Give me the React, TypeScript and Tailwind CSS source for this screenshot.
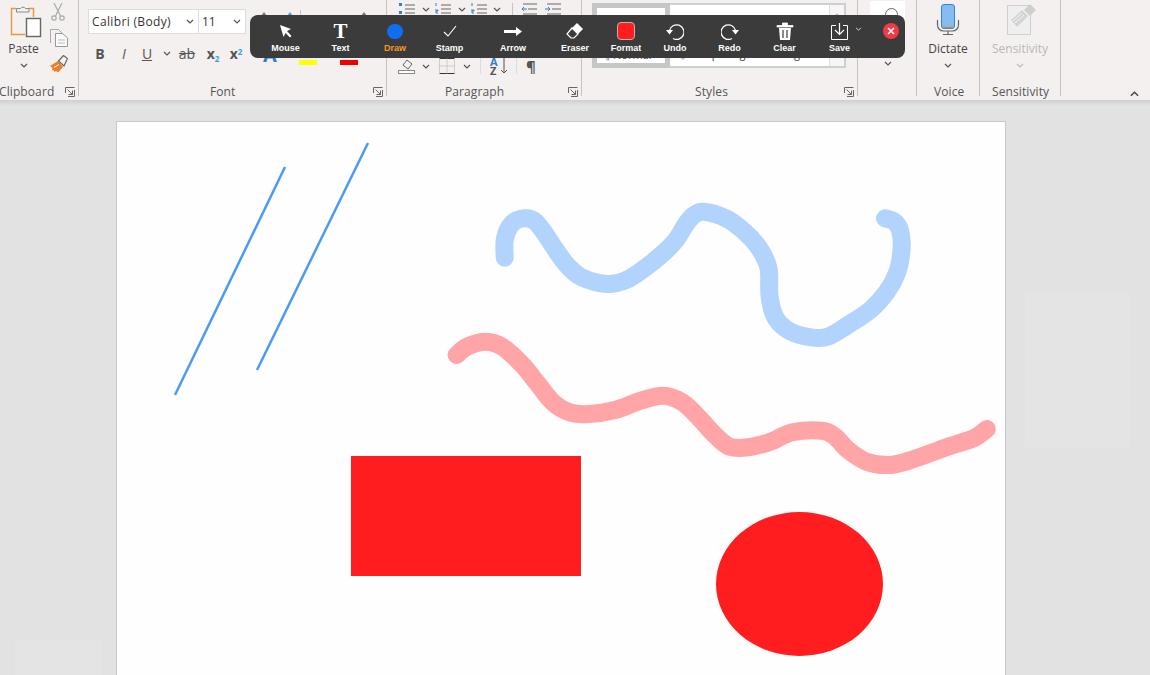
import React from 'react'

const ui = { fontFamily: '"Open Sans", "Noto Sans", sans-serif' }

const Chev = ({ className = 'w-[8px] h-[5px]', color = '#555' }: { className?: string; color?: string }) => (
  <svg viewBox="0 0 8 5" className={className}>
    <path d="M1 1l3 3 3-3" fill="none" stroke={color} strokeWidth="1.2" />
  </svg>
)

const Launcher = () => (
  <svg viewBox="0 0 10 10" className="w-[10px] h-[10px]">
    <path d="M.5 6V.5h9M2.500 2.500l5 5M7.500 3.500v4h-4" fill="none" stroke="#666" strokeWidth="1" />
    <path d="M9.500 3v6.500H3" fill="none" stroke="#666" strokeWidth="1" />
  </svg>
)

const Label = ({ children, pl, launcher = true }: { children: string; pl: string; launcher?: boolean }) => (
  <div className={`flex items-center h-[18px] mt-auto mb-[-5px] pr-[3px] text-[12px] whitespace-nowrap text-[#555] ${pl}`}>
    <span className="tracking-[0.1px]">{children}</span>
    {launcher && <span className="ml-auto mb-[1px] flex"><Launcher /></span>}
  </div>
)

// lines of a list icon
const ListIcon = ({ mark }: { mark: string }) => (
  <svg viewBox="0 0 16 12" className="w-[16px] h-[12px]">
    <path d="M6 2h10M6 6h10M6 10h10" stroke="#666" strokeWidth="1" />
    {mark === 'dot' && <path d="M0 0h3v3H0zM0 8h3v3H0z" fill="#2f7fc9" />}
    {mark === 'num' && <path d="M1 0v3M0 7h3v1H1v2h2" fill="none" stroke="#2f7fc9" strokeWidth="1" />}
  </svg>
)

// only the tip of these buttons shows above the toolbar
const Peak = ({ className, color = '#777' }: { className: string; color?: string }) => (
  <svg viewBox="0 0 6 4" className={`w-[6px] h-[4px] self-start mt-[3px] ${className}`}>
    <path d="M0 4l3-4 3 4z" fill={color} />
  </svg>
)

const ClipboardGroup = () => (
  <div className="w-[79px] shrink-0 flex flex-col border-r border-[#c6c4c2]">
    <div className="flex">
      <div className="w-[47px] flex flex-col items-center">
        <svg viewBox="0 0 32 34" className="w-[32px] h-[34px] mt-[4px] ml-[5px]">
          <path d="M6 4.500H1.500v26H15M19 4.500h4.500V13" fill="none" stroke="#e19a3c" strokeWidth="1.400" />
          <path d="M6.500 8V4.500h4a3 3 0 0 1 5 0h3.500V8z" fill="#f3f0ef" stroke="#8a8a8a" strokeWidth="1" />
          <rect x="16.500" y="14.500" width="14" height="18" fill="#fff" stroke="#666" strokeWidth="1.400" />
        </svg>
        <div className="text-[12px] text-[#444] mt-[2px] leading-[18px]">Paste</div>
        <div className="mt-[5px] flex"><Chev /></div>
      </div>
      <div className="flex flex-col items-center w-[24px]">
        <svg viewBox="0 0 14 18" className="w-[14px] h-[18px] mt-[3px] ml-[-2px]">
          <path d="M3 0l6.500 13M11 0L4.500 13" stroke="#aaa" strokeWidth="1.200" />
          <circle cx="3" cy="15" r="2.200" fill="none" stroke="#aaa" strokeWidth="1.200" />
          <circle cx="11" cy="15" r="2.200" fill="none" stroke="#aaa" strokeWidth="1.200" />
        </svg>
        <svg viewBox="0 0 18 18" className="w-[18px] h-[18px] mt-[8px]">
          <path d="M.5 14V.5h8L12 4v1" fill="none" stroke="#aaa" />
          <path d="M5.500 4.500h7l5 4.500v8.500h-12z" fill="#fafafa" stroke="#999" />
          <path d="M8 11h7M8 14h7" stroke="#bbb" />
        </svg>
        <svg viewBox="0 0 18 18" className="w-[18px] h-[18px] mt-[8px]">
          <path d="M0 11l8-5 5 6-5 5.500-2-1.500-1.500 1-1-2-1.500.500.500-2.500z" fill="#ea7f28" />
          <path d="M4 12.500l5-3" stroke="#fff" strokeWidth="1" />
          <path d="M8.500 6l5-5.500 4 3-3.500 7.500z" fill="#f3f0ef" stroke="#666" strokeWidth="1.200" />
        </svg>
      </div>
    </div>
    <Label pl="ml-[-1px]">Clipboard</Label>
  </div>
)

const FontGroup = () => (
  <div className="w-[308px] shrink-0 flex flex-col border-r border-[#c6c4c2]">
    <div className="flex items-center pl-[9px] mt-[9px]">
      <div className="w-[111px] h-[25px] bg-white border border-[#dcdcdc] flex items-center pl-[3px] pr-[4px] text-[12px] text-[#333]">
        <span className="tracking-[0.35px]">Calibri (Body)</span>
        <span className="ml-auto flex"><Chev /></span>
      </div>
      <div className="w-[47px] h-[25px] bg-white border border-l-0 border-[#dcdcdc] flex items-center pl-[3px] pr-[4px] text-[12px] text-[#333]">
        <span>11</span>
        <span className="ml-auto flex"><Chev /></span>
      </div>
      <Peak className="ml-[15px]" />
      <Peak className="ml-[20px]" color="#5a9bd5" />
      <div className="w-px h-[6px] self-start mt-[1px] ml-[7px] bg-[#c6c4c2]" />
      <Peak className="ml-[60px]" />
    </div>
    <div className="flex items-center pl-[9px] mt-[6px] h-[26px] text-[#555]">
      <span className="w-[24px] text-center text-[14px] font-bold">B</span>
      <span className="w-[24px] text-center text-[14px] italic">I</span>
      <span className="w-[22px] text-center text-[14px] underline">U</span>
      <span className="w-[18px] flex justify-center"><Chev /></span>
      <span className="w-[22px] text-center text-[14px] line-through">ab</span>
      <span className="w-[28px] text-center text-[14px] font-bold pl-[2px]">x<sub className="text-[8px] text-[#3b9bd8] bottom-[-3px]">2</sub></span>
      <span className="w-[20px] text-center text-[14px] font-bold">x<sup className="text-[8px] text-[#3b9bd8]">2</sup></span>
      <span className="w-[42px] text-center text-[20px] font-bold text-[#2a7fd0] leading-none pl-[6px] mt-[4px]">A</span>
      <div className="ml-[11px] w-[18px] h-[5px] mt-[18px] bg-[#ffff00]" />
      <div className="ml-[23px] w-[18px] h-[5px] mt-[18px] bg-[#f00000]" />
    </div>
    <Label pl="pl-[131px]">Font</Label>
  </div>
)

const ParagraphGroup = () => (
  <div className="w-[195px] shrink-0 flex flex-col border-r border-[#c6c4c2]">
    <div className="flex items-center pl-[12px] mt-[3px] h-[12px]">
      <ListIcon mark="dot" />
      <span className="ml-[7px] flex"><Chev /></span>
      <span className="ml-[5px] flex"><ListIcon mark="num" /></span>
      <span className="ml-[7px] flex"><Chev /></span>
      <span className="ml-[5px] flex"><ListIcon mark="num" /></span>
      <span className="ml-[6px] flex"><Chev /></span>
      <div className="w-px h-[12px] bg-[#c6c4c2] ml-[11px]" />
      <svg viewBox="0 0 16 12" className="w-[16px] h-[12px] ml-[8px]">
        <path d="M2 1h14M7 6h9M2 11h14" stroke="#666" />
        <path d="M6 6H1l2-2M1 6l2 2" fill="none" stroke="#2f7fc9" />
      </svg>
      <svg viewBox="0 0 16 12" className="w-[16px] h-[12px] ml-[8px]">
        <path d="M2 1h14M7 6h9M2 11h14" stroke="#666" />
        <path d="M0 6h5L3 4M5 6L3 8" fill="none" stroke="#2f7fc9" />
      </svg>
    </div>
    <div className="flex items-center pl-[11px] mt-[43px] h-[16px]">
      <svg viewBox="0 0 18 16" className="w-[18px] h-[16px]">
        <path d="M5 7l4-5 5 4-4 5z" fill="none" stroke="#666" />
        <rect x=".5" y="12.500" width="16" height="3" fill="#fff" stroke="#888" />
      </svg>
      <span className="ml-[6px] flex"><Chev /></span>
      <svg viewBox="0 0 16 16" className="w-[16px] h-[16px] ml-[9px]">
        <path d="M.5.5h15M.5 15.500h15" stroke="#333" />
        <path d="M.5 8h15M8 .5v15M.5.5v15M15.500.5v15" stroke="#aaa" strokeDasharray="1 1" />
      </svg>
      <span className="ml-[8px] flex"><Chev /></span>
      <div className="w-px h-[16px] bg-[#dcdcdc] ml-[9px]" />
      <div className="ml-[9px] w-[18px] text-[11px] leading-[9px] font-bold text-[#2f7fc9]">
        A<div className="text-[#555]">Z</div>
      </div>
      <svg viewBox="0 0 8 16" className="w-[8px] h-[16px] ml-[-8px]">
        <path d="M4 0v15M1 12l3 3 3-3" fill="none" stroke="#555" />
      </svg>
      <div className="w-px h-[16px] bg-[#dcdcdc] ml-[8px]" />
      <span className="ml-[9px] text-[15px] leading-none text-[#555] font-bold">¶</span>
    </div>
    <Label pl="pl-[58px]">Paragraph</Label>
  </div>
)

const StylesGroup = () => (
  <div className="w-[276px] shrink-0 flex flex-col border-r border-[#c6c4c2]">
    <div className="flex ml-[10px] mt-[3px] h-[65px] w-[254px] border-2 border-[#cfcfcf]">
      <div className="w-[78px] ml-[-2px] my-[-2px] shrink-0 border-[5px] border-[#c6c6c6] bg-white flex items-end pb-[5px] text-[11px] leading-[6px] text-[#444] pl-[6px]">¶ Normal</div>
      <div className="flex-1 bg-white flex items-end gap-[12px] pl-[8px] pb-[9px] text-[11px] leading-[6px] text-[#444]">
        <span>¶ No Spacing</span>
        <span>Heading 1</span>
      </div>
      <div className="w-[15px] bg-[#f7f6f6] border-l border-[#ddd] flex flex-col items-center justify-between py-[8px]">
        <Chev className="w-[8px] h-[5px] rotate-180" color="#bbb" />
        <Chev />
      </div>
    </div>
    <Label pl="pl-[113px]">Styles</Label>
  </div>
)

const EditingGroup = () => (
  <div className="w-[59px] shrink-0 flex flex-col border-r border-[#c6c4c2]">
    <div className="ml-[12px] mt-[1px] w-[35px] h-[50px] bg-white flex justify-center pt-[7px] pl-[8px]">
      <span className="w-[13px] h-[13px] rounded-full border-[1.5px] border-[#666]" />
    </div>
    <div className="flex justify-center mt-[10px] ml-[1px]"><Chev /></div>
  </div>
)

const VoiceGroup = () => (
  <div className="w-[63px] shrink-0 flex flex-col items-stretch border-r border-[#c6c4c2]">
    <div className="flex flex-col items-center">
      <svg viewBox="0 0 24 32" className="w-[24px] h-[32px] mt-[4px]">
        <rect x="5.500" y=".5" width="13" height="24" rx="2.500" fill="#86bcf0" stroke="#2f86d6" />
        <path d="M6 23.500h12" stroke="#b98a63" strokeWidth="1.500" />
        <path d="M1.500 16v5a6 6 0 0 0 6 6h9a6 6 0 0 0 6-6v-5M12 27v3M7 30.500h10" fill="none" stroke="#666" strokeWidth="1.200" />
      </svg>
      <div className="text-[12px] text-[#444] mt-[4px] leading-[18px]">Dictate</div>
      <div className="mt-[5px] flex"><Chev /></div>
    </div>
    <Label pl="pl-[17px]" launcher={false}>Voice</Label>
  </div>
)

const SensitivityGroup = () => (
  <div className="w-[81px] shrink-0 flex flex-col border-r border-[#c6c4c2]">
    <div className="flex flex-col items-center">
      <svg viewBox="0 0 30 32" className="w-[30px] h-[32px] mt-[3px] ml-[3px]">
        <rect x=".5" y="2.500" width="23" height="29" fill="#efefef" stroke="#cfcfcf" />
        <path d="M4 17L15 7l6 6-11 11z" fill="#d4d4d4" />
        <path d="M6 18l9-8M8 20l9-8" stroke="#f3f3f3" />
        <path d="M17 7l6-6 6 6-6 6z" fill="#cfcfcf" />
      </svg>
      <div className="text-[12px] text-[#b8b8b8] mt-[5px] leading-[18px]">Sensitivity</div>
      <div className="mt-[5px] flex"><Chev color="#bbb" /></div>
    </div>
    <Label pl="pl-[12px]" launcher={false}>Sensitivity</Label>
  </div>
)

const tools = [
  { label: 'Mouse', w: 'w-[55px]', icon: (
    <svg viewBox="0 0 14 14" className="w-[14px] h-[14px]">
      <path d="M1 1l11 4-4 2 4.500 5-1.500 1.500L6.500 9 4.500 13z" fill="#fff" />
    </svg>
  ) },
  { label: 'Text', w: 'w-[55px]', icon: <span className="text-[21px] leading-[20px] font-bold text-white" style={{ fontFamily: '"Liberation Serif", serif' }}>T</span> },
  { label: 'Draw', w: 'w-[54px]', active: true, icon: <span className="w-[16px] h-[15px] rounded-full bg-[#0e6fef]" /> },
  { label: 'Stamp', w: 'w-[55px]', icon: (
    <svg viewBox="0 0 14 12" className="w-[14px] h-[12px]">
      <path d="M1 7l4 4 8-10" fill="none" stroke="#fff" strokeWidth="1.100" />
    </svg>
  ) },
  { label: 'Arrow', w: 'w-[72px]', icon: (
    <svg viewBox="0 0 18 9" className="w-[18px] h-[9px]">
      <path d="M0 3h12V0l6 4.500-6 4.500V6H0z" fill="#fff" />
    </svg>
  ) },
  { label: 'Eraser', w: 'w-[52px]', icon: (
    <svg viewBox="0 0 18 18" className="w-[18px] h-[18px]">
      <path d="M11 1l6 6-5 5-6-6z" fill="#fff" />
      <path d="M6 6l6 6-4 4H5l-4-4z" fill="none" stroke="#fff" strokeWidth="1.200" />
    </svg>
  ) },
  { label: 'Format', w: 'w-[50px]', icon: <span className="w-[18px] h-[18px] rounded-[4px] bg-[#ff1d1f] border border-[#c4b0b0]" /> },
  { label: 'Undo', w: 'w-[48px]', icon: (
    <svg viewBox="0 0 18 18" className="w-[18px] h-[18px]">
      <path d="M3.500 8.500A7.300 7.300 0 1 1 7 16.500" fill="none" stroke="#fff" strokeWidth="1.300" />
      <path d="M0 8h7l-3.500 4.500z" fill="#fff" />
    </svg>
  ) },
  { label: 'Redo', w: 'w-[55px]', ml: 'ml-[3px]', icon: (
    <svg viewBox="0 0 18 18" className="w-[18px] h-[18px]">
      <path d="M14.500 8.500A7.300 7.300 0 1 0 11 16.500" fill="none" stroke="#fff" strokeWidth="1.300" />
      <path d="M18 8h-7l3.500 4.500z" fill="#fff" />
    </svg>
  ) },
  { label: 'Clear', w: 'w-[55px]', icon: (
    <svg viewBox="0 0 18 18" className="w-[18px] h-[18px]">
      <path d="M1 3.500h16v1.500H1zM6.500 3.500V1h5v2.500" fill="#fff" stroke="#fff" strokeWidth=".8" />
      <path d="M3 6h12l-1 12H4z" fill="#fff" />
      <path d="M7 8v8M11 8v8" stroke="#3a3b3a" strokeWidth="1.200" />
    </svg>
  ) },
  { label: 'Save', w: 'w-[55px]', icon: (
    <svg viewBox="0 0 17 17" className="w-[17px] h-[17px]">
      <path d="M5 2.500H.5v14h16v-14H12" fill="none" stroke="#fff" />
      <path d="M8.500 0v11M4 7l4.500 4.500L13 7" fill="none" stroke="#fff" strokeWidth="1.200" />
    </svg>
  ) },
]

const Toolbar = () => (
  <div className="absolute left-[250px] top-[15px] w-[655px] h-[43px] rounded-[8px] bg-[#3a3b3a] flex pl-[8px]" style={{ fontFamily: '"Liberation Sans", sans-serif' }}>
    {tools.map(t => (
      <div key={t.label} className={`${t.w} ${t.ml ?? ''} relative flex flex-col items-center`}>
        <div className="h-[22px] mt-[5px] flex items-center justify-center">{t.icon}</div>
        <div className={`text-[9px] leading-[11px] font-bold mt-[1px] ${t.active ? 'text-[#f59a23]' : 'text-white'}`}>{t.label}</div>
        {t.label === 'Save' && <span className="absolute right-[5px] top-[12px] flex"><Chev color="#ddd" className="w-[7px] h-[4px]" /></span>}
      </div>
    ))}
    <div className="ml-[16px] mt-[8px] w-[16px] h-[16px] rounded-full bg-[#f03a45] flex items-center justify-center">
      <svg viewBox="0 0 8 8" className="w-[8px] h-[8px]">
        <path d="M1 1l6 6M7 1L1 7" stroke="#fff" strokeWidth="1.500" />
      </svg>
    </div>
  </div>
)

const bluePts = [[504.7,257.7],[504.7,240],[509.5,226.7],[516.9,220],[526.9,218.3],[535.4,221.7],[544.7,233.3],[555.8,250],[566.9,265],[581.7,277.3],[607.6,284],[626.1,280],[644.6,268.3],[663.1,253.3],[676,240],[686,224],[694,215],[703.8,211.7],[726,218.3],[744.5,231.7],[759.3,248.3],[768.5,268.3],[769.6,296.7],[775.9,318.3],[790.7,331.7],[811,337.3],[827.7,336.7],[848,325],[870.3,310],[886.9,291.7],[898,270],[901.7,246.7],[899.9,230],[894.3,221.7],[885,218.3]]
const pinkPts = [[456.6,355],[467,346.7],[485.5,341.7],[502.1,346.7],[522.5,365],[537.3,383.3],[553.9,403.3],[570.6,412.7],[589.1,414],[615,410],[640.9,400.7],[663.1,395.7],[681.6,401.7],[696.4,415],[714.9,435],[729.7,446.7],[748.2,447.3],[770.4,441.7],[792.6,432.3],[822.2,430.7],[835.1,436.7],[848.1,450],[866.6,461.7],[888.8,465],[911,460],[948,446.7],[973.8,438.3],[986.8,429]]

// smooth pen stroke through the points
const smooth = (p: number[][]) => {
  let d = `M${p[0][0]} ${p[0][1]}`
  for (let i = 0; i < p.length - 1; i++) {
    const a = p[Math.max(i - 1, 0)], b = p[i], c = p[i + 1], e = p[Math.min(i + 2, p.length - 1)]
    d += `C${b[0] + (c[0] - a[0]) / 6} ${b[1] + (c[1] - a[1]) / 6} ${c[0] - (e[0] - b[0]) / 6} ${c[1] - (e[1] - b[1]) / 6} ${c[0]} ${c[1]}`
  }
  return d
}

const Page = () => (
  <div className="ml-[116px] w-[890px] flex-1 bg-[#fefefe] border-l border-r border-t border-[#c8c8c8] overflow-hidden">
    <svg viewBox="117 122 888 553" className="block w-[888px] h-[553px]">
      <path d="M285 167L175 395M368 143L257 370" fill="none" stroke="#4a9bf5" strokeWidth="2.500" />
      <path d={smooth(bluePts)} fill="none" stroke="#b2d3fc" strokeWidth="18" strokeLinecap="round" strokeLinejoin="round" />
      <path d={smooth(pinkPts)} fill="none" stroke="#ffa5a8" strokeWidth="18" strokeLinecap="round" strokeLinejoin="round" />
      <rect x="351" y="456" width="230" height="120" fill="#ff1d1f" />
      <ellipse cx="799.500" cy="584" rx="83.500" ry="72" fill="#ff1d1f" />
    </svg>
  </div>
)

export default function App() {
  return (
    <div className="relative w-[1150px] h-[675px] overflow-hidden flex flex-col bg-[#e2e2e2]" style={ui}>
      <div className="flex h-[100px] shrink-0 bg-[#f3f0ef] pb-[4px]">
        <ClipboardGroup />
        <FontGroup />
        <ParagraphGroup />
        <StylesGroup />
        <EditingGroup />
        <VoiceGroup />
        <SensitivityGroup />
        <div className="flex-1 flex items-end justify-end pr-[10px]">
          <Chev className="w-[11px] h-[6px] rotate-180 mb-[-1px]" color="#444" />
        </div>
      </div>
      <div className="h-[5px] shrink-0 bg-gradient-to-b from-[#cfcfcf] to-[#e0e0e0]" />
      <div className="flex-1 flex flex-col pt-[16px] min-h-0">
        <Page />
      </div>
      <div className="absolute left-[1025px] top-[292px] w-[105px] h-[155px] bg-[#e4e4e5]" />
      <div className="absolute left-[15px] top-[640px] w-[86px] h-[35px] bg-[#e4e4e5]" />
      <Toolbar />
    </div>
  )
}
